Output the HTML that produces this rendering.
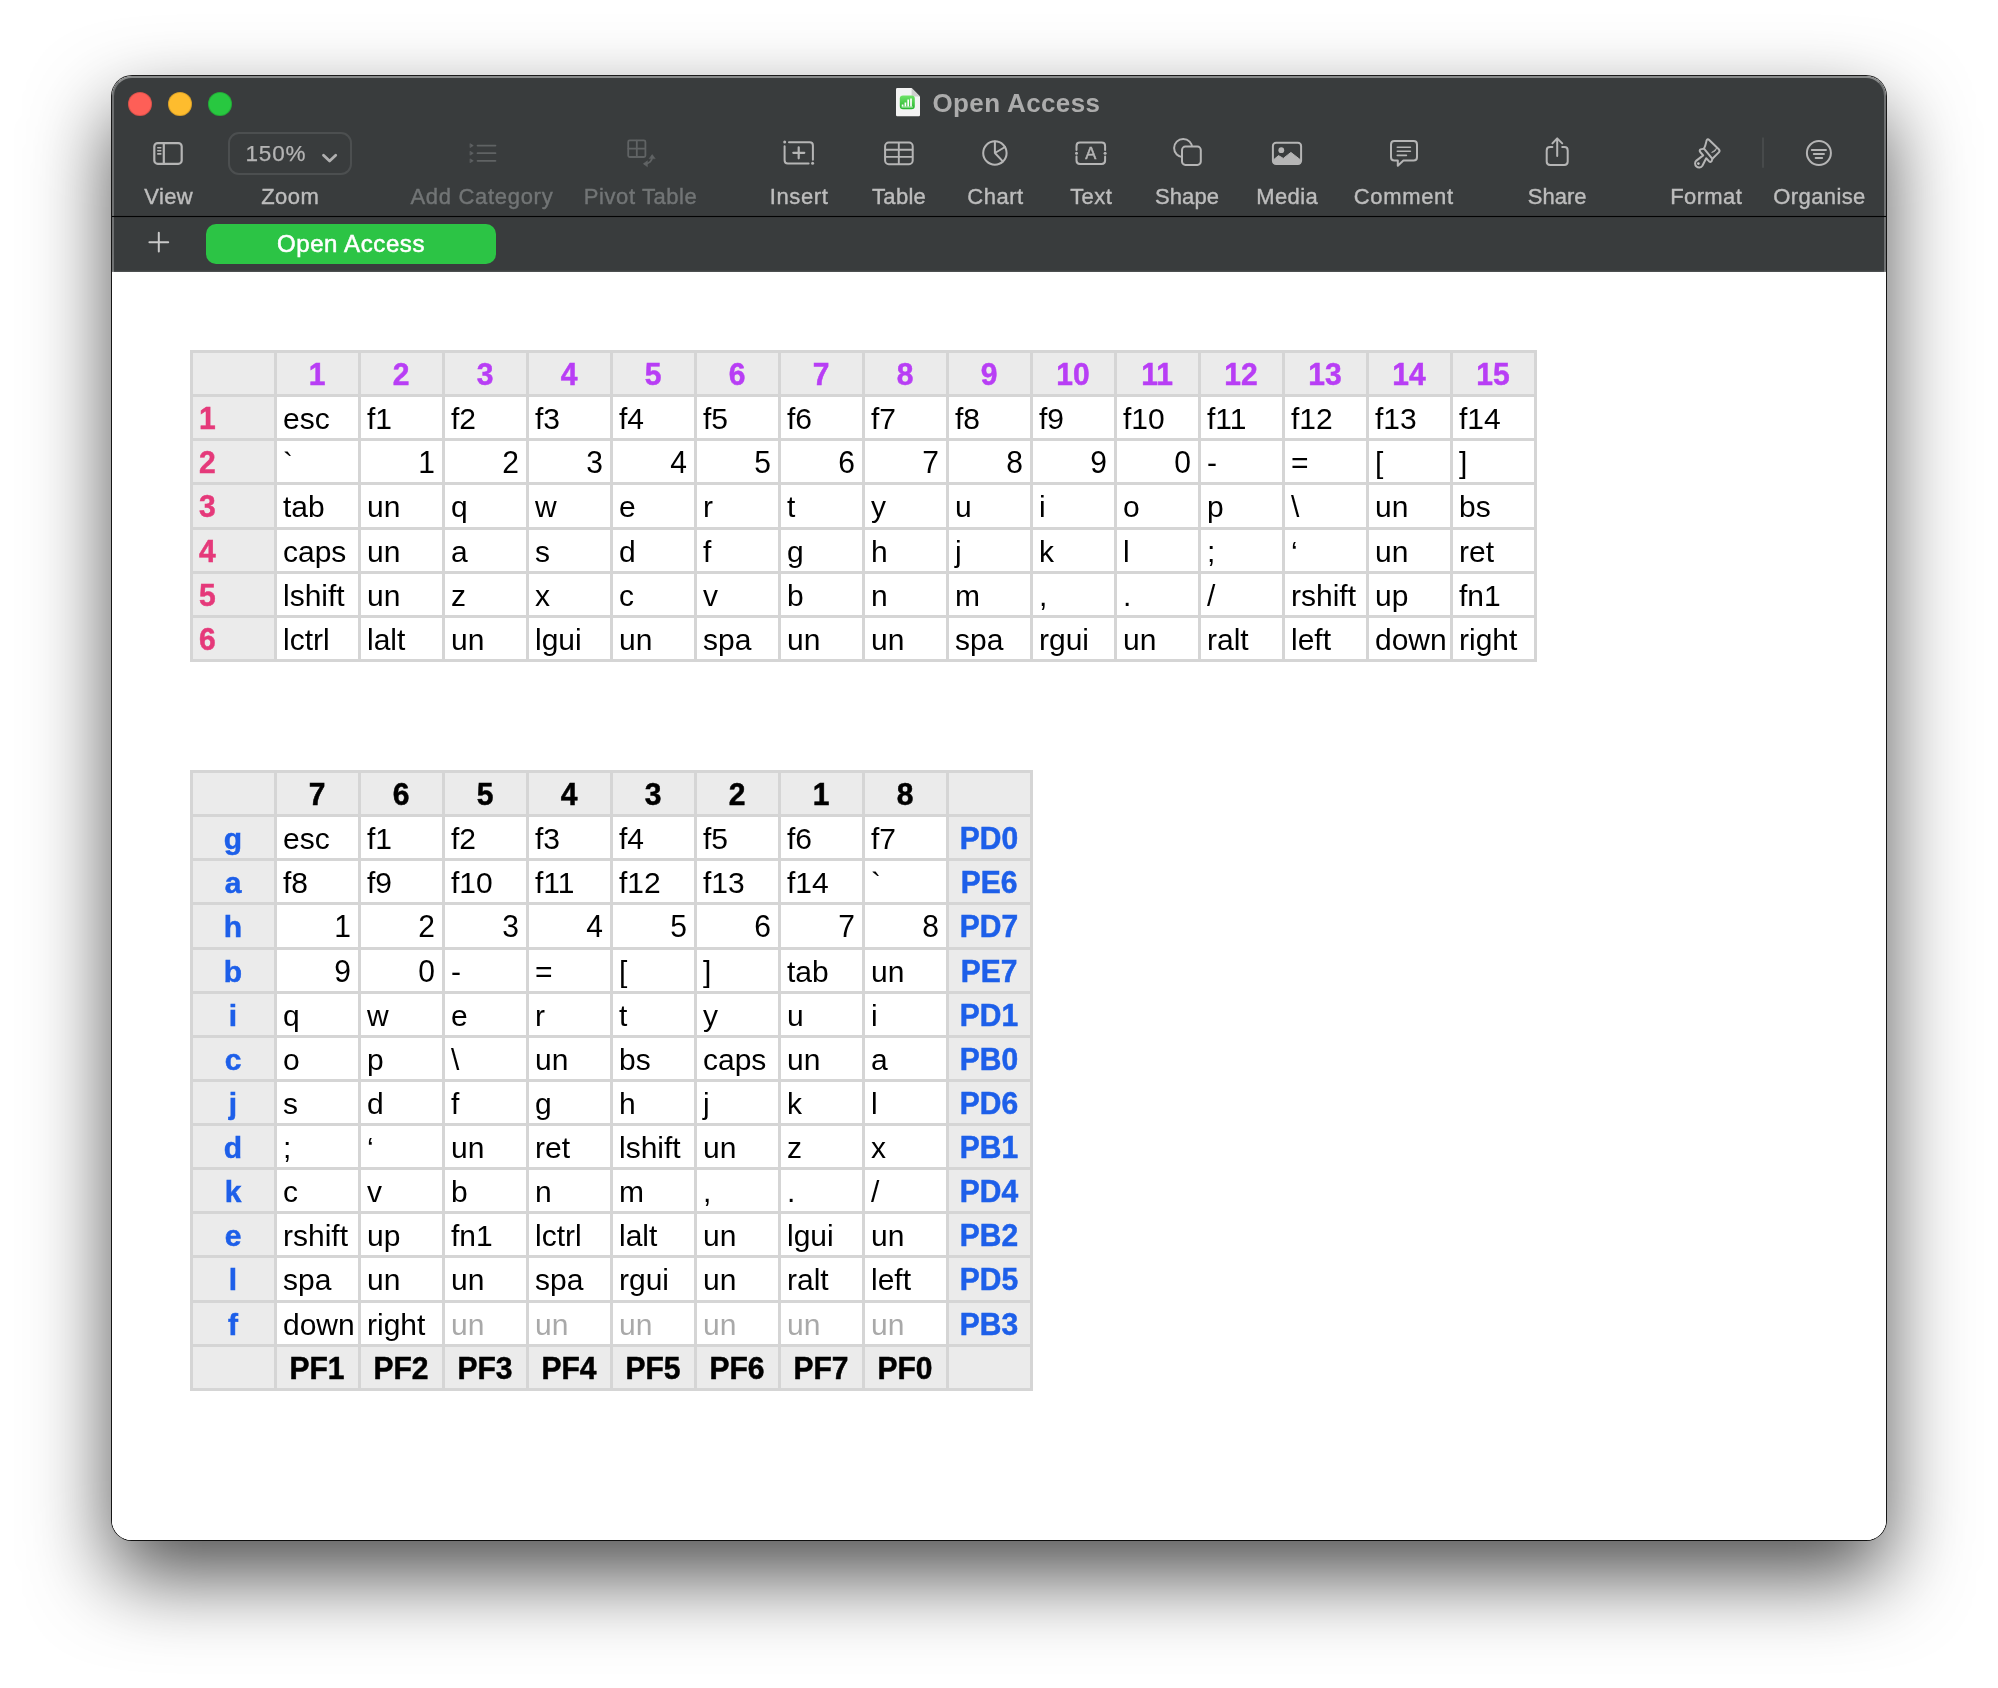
<!DOCTYPE html>
<html lang="en">
<head>
<meta charset="utf-8">
<title>Open Access</title>
<style>
html,body{margin:0;padding:0;}
body{width:1998px;height:1688px;background:#fff;overflow:hidden;position:relative;
 font-family:"Liberation Sans",sans-serif;}
#shadow{position:absolute;left:112px;top:76px;width:1774px;height:1464px;border-radius:20px;
 box-shadow:0 0 0 1px rgba(0,0,0,.88), 0 36px 82px 0 rgba(0,0,0,.69);}
#win{position:absolute;left:112px;top:76px;width:1774px;height:1464px;border-radius:20px;overflow:hidden;background:#fff;}
#inner{will-change:transform;position:absolute;left:-112px;top:-76px;width:1998px;height:1688px;}
#chrome{position:absolute;left:112px;top:76px;width:1774px;height:196px;background:#393c3d;box-shadow:inset 0 -1px 0 #4c4f50, inset 0 -2px 0 #3e4142;}
#chrome .hl{position:absolute;left:0;top:0;width:100%;height:100%;border-radius:20px 20px 0 0;box-sizing:border-box;border-top:2px solid rgba(255,255,255,.4);border-left:2px solid rgba(255,255,255,.27);border-right:2px solid rgba(255,255,255,.27);pointer-events:none;}
#sep{position:absolute;left:112px;top:216px;width:1774px;height:1px;background:#020303;box-shadow:0 0 1px rgba(0,0,0,.5);}
.tl{position:absolute;top:92px;width:24px;height:24px;border-radius:50%;box-shadow:inset 0 0 0 1px rgba(0,0,0,.14);}
#title{position:absolute;left:932.5px;top:86px;height:34px;line-height:34px;font-size:26px;font-weight:bold;color:#acacac;white-space:nowrap;letter-spacing:.37px;}
.lab{position:absolute;top:183px;-webkit-text-stroke:0.4px currentColor;height:28px;line-height:28px;font-size:22px;color:#bdbdbd;white-space:nowrap;transform:translateX(-50%);text-align:center;}
.lab.dis{color:#727576;}
#zoombox{position:absolute;left:228px;top:132px;width:124px;height:43px;border:2px solid #4c4f50;border-radius:11px;box-sizing:border-box;}
#zoomtxt{position:absolute;left:245.5px;top:139px;height:30px;line-height:30px;font-size:22.5px;color:#b4b4b4;letter-spacing:.85px;-webkit-text-stroke:0.25px currentColor;}
#tab{position:absolute;left:206px;top:224px;width:290px;height:40px;border-radius:10px;background:#2cc445;color:#fff;font-size:24px;line-height:40px;text-align:center;letter-spacing:.62px;-webkit-text-stroke:0.55px #fff;}
#canvas{position:absolute;left:112px;top:272px;width:1774px;height:1268px;background:#fff;}
.tbl{position:absolute;display:grid;background:#d5d5d5;padding:3px;gap:3px;grid-auto-rows:41.13px;font-size:30px;line-height:41px;color:#000;}
.tbl>div{background:#fff;padding:1px 0 0 6px;box-sizing:border-box;white-space:nowrap;overflow:hidden;}
.tbl>div.h{background:#ebebeb;font-weight:bold;-webkit-text-stroke:0.5px currentColor;}
.tbl>div.c{text-align:center;padding-left:0;padding-right:1px;}
.tbl>div.r{text-align:right;padding-right:7px;}
.tbl>div.g{color:#a9a9a9;}
.pu{color:#b83ef5;}
.pk{color:#e5397a;}
.bl{color:#1d5fe9;}
.bk{color:#000;}
#t1{left:190px;top:350px;grid-template-columns:repeat(16,81px);}
#t2{left:190px;top:770px;grid-template-columns:repeat(10,81px);}
#txtA{position:absolute;left:1080.8px;top:143.4px;width:20px;height:20px;line-height:20px;text-align:center;font-size:16.5px;color:#b5b5b5;-webkit-text-stroke:0.5px #b5b5b5;}
.tall{display:inline-block;transform:translateY(-0.4px) scaleY(1.055);transform-origin:50% 75.5%;}

</style>
</head>
<body>
<div id="shadow"></div>
<div id="win"><div id="inner">
<div id="chrome"><div class="hl"></div></div>
<div id="sep"></div>
<div class="tl" style="left:128px;background:#fe5f57"></div>
<div class="tl" style="left:168px;background:#febc2e"></div>
<div class="tl" style="left:208px;background:#28c840"></div>
<div id="title">Open Access</div>
<div id="zoombox"></div>
<div id="zoomtxt">150%</div>
<div class="lab" style="left:168.7px;letter-spacing:0.43px">View</div>
<div class="lab" style="left:290.2px;letter-spacing:0.43px">Zoom</div>
<div class="lab dis" style="left:481.9px;letter-spacing:0.70px">Add Category</div>
<div class="lab dis" style="left:640.6px;letter-spacing:0.57px">Pivot Table</div>
<div class="lab" style="left:799.1px;letter-spacing:0.58px">Insert</div>
<div class="lab" style="left:899.1px;letter-spacing:0.28px">Table</div>
<div class="lab" style="left:995.5px;letter-spacing:0.54px">Chart</div>
<div class="lab" style="left:1091.2px;letter-spacing:0.40px">Text</div>
<div class="lab" style="left:1187.0px;letter-spacing:0.08px">Shape</div>
<div class="lab" style="left:1287.2px;letter-spacing:0.42px">Media</div>
<div class="lab" style="left:1403.8px;letter-spacing:0.66px">Comment</div>
<div class="lab" style="left:1557.2px;letter-spacing:0.00px">Share</div>
<div class="lab" style="left:1706.2px;letter-spacing:0.38px">Format</div>
<div class="lab" style="left:1819.5px;letter-spacing:0.40px">Organise</div>
<div id="tab">Open Access</div>
<svg id="icons" width="1998" height="1688" viewBox="0 0 1998 1688" style="position:absolute;left:0;top:0;pointer-events:none" fill="none" stroke="#b5b5b5" stroke-width="2" stroke-linecap="round" stroke-linejoin="round">
<!-- view -->
<g>
<rect x="154.3" y="143.1" width="27.4" height="20.7" rx="3.4" stroke-width="2.2"/>
<path d="M163.8 143.5V163.5" stroke-width="2.2"/>
<path d="M157.8 147.7H160.8M157.8 150.8H160.8M157.8 153.9H160.8" stroke-width="1.6"/>
</g>
<!-- zoom chevron -->
<path d="M323.5 155.2L329.6 161L335.7 155.2" stroke-width="2.8" stroke="#b0b0b0"/>
<!-- add category (disabled) -->
<g stroke="#606364" stroke-width="1.7">
<path d="M477.5 145.6H495.5M477.5 153.2H495.5M477.5 160.8H495.5"/>
<path d="M470.3 143.8L473.3 145.6L470.3 147.4ZM470.3 151.4L473.3 153.2L470.3 155ZM470.3 159L473.3 160.8L470.3 162.6Z" fill="#606364" stroke-width="0.6"/>
</g>
<!-- pivot table (disabled) -->
<g stroke="#606364" stroke-width="1.8">
<rect x="628.2" y="140.4" width="17.2" height="16.6" rx="1.5"/>
<path d="M636.8 140.6V157M628.4 148.7H645.2"/>
<path d="M652.2 156.3C652.2 161.2 649 163.8 644.6 163.8" />
<path d="M649.4 158.4L652.2 154.6L655 158.4ZM647.2 161L643.4 163.8L647.2 166.6Z" fill="#606364" stroke-width="0.6"/>
</g>
<!-- insert -->
<g>
<path d="M789 142.2H809.7Q812.9 142.2 812.9 145.4V159.8M808.6 163.4H787.8Q784.6 163.4 784.6 160.2V146.2"/>
<circle cx="784.7" cy="142.1" r="1.5" fill="#b5b5b5" stroke="none"/>
<circle cx="812.6" cy="163.3" r="1.5" fill="#b5b5b5" stroke="none"/>
<path d="M793.3 152.8H804.3M798.7 147.3V158.3" stroke-width="2.2"/>
</g>
<!-- table -->
<g>
<rect x="885.1" y="142.6" width="27.6" height="21.6" rx="3.6"/>
<path d="M885.5 149.7H912.3M885.5 156.9H912.3M898.8 143V164" stroke-width="1.9"/>
</g>
<!-- chart -->
<g>
<circle cx="994.9" cy="153" r="11.7"/>
<path d="M994.9 141.4V153L1005 147M994.9 153L1002.8 161.4"/>
</g>
<!-- text -->
<g>
<path d="M1076.5 150V146Q1076.5 142.6 1079.9 142.6H1101.7Q1105.1 142.6 1105.1 146V150M1076.5 156.4V160.6Q1076.5 164 1079.9 164H1101.7Q1105.1 164 1105.1 160.6V156.4"/>
<circle cx="1076.5" cy="153.2" r="1.5" fill="#b5b5b5" stroke="none"/>
<circle cx="1105.1" cy="153.2" r="1.5" fill="#b5b5b5" stroke="none"/>
</g>
<!-- shape -->
<g>
<circle cx="1183.2" cy="148.1" r="9.1"/>
<rect x="1182" y="146.6" width="18.8" height="18.3" rx="3.4" fill="#393c3d"/>
</g>
<!-- media -->
<g>
<rect x="1272.9" y="142.8" width="28.2" height="21.2" rx="3.2"/>
<circle cx="1281.3" cy="150.2" r="2.9" fill="#b5b5b5" stroke="none"/>
<path d="M1273.6 159.8L1278.5 155.6L1283.3 158.4L1290.9 152.4L1300.4 159.8V163.2H1273.6Z" fill="#b5b5b5" stroke-width="1"/>
</g>
<!-- comment -->
<g>
<path d="M1394.4 141.1H1413.6Q1417 141.1 1417 144.5V157.2Q1417 160.6 1413.6 160.6H1403.4L1397.8 165.8V160.6H1394.4Q1391 160.6 1391 157.2V144.5Q1391 141.1 1394.4 141.1Z"/>
<path d="M1397.3 147.2H1410.4M1397.3 151.3H1410.4M1397.3 155.4H1406.4" stroke-width="1.6"/>
</g>
<!-- share -->
<g>
<path d="M1552.4 147H1550.1Q1546.7 147 1546.7 150.4V161.6Q1546.7 165 1550.1 165H1564.3Q1567.7 165 1567.7 161.6V150.4Q1567.7 147 1564.3 147H1562.2"/>
<path d="M1557.2 156V138.8M1552.4 143.4L1557.2 138.4L1562.2 143.4"/>
</g>
<!-- format -->
<g>
<path d="M1704 148.6C1705.6 145.6 1706 143 1706.6 140.4Q1707.6 138.4 1709.2 140L1718.8 149.2Q1720.4 150.8 1718.8 152.4L1712.4 158.8"/>
<path d="M1704 148.6L1712.4 158.8L1711.6 161.2Q1710.6 162.6 1709.2 161.4L1706.2 158.2L1702.4 165.8A4 4 0 1 1 1696.4 160.6L1703.2 155.4L1700.2 152Q1699 150.4 1700.6 149.4Z"/>
<circle cx="1698.4" cy="163.6" r="1.3" fill="#c8c8c8" stroke="none"/>
<path d="M1716.4 148.4C1716 150.6 1714.4 152 1711.6 152.4C1713.4 151.4 1714.8 150.2 1716.4 148.4Z" fill="#b5b5b5" stroke-width="0.8"/>
</g>
<!-- separator -->
<path d="M1763 137.5V167.8" stroke="#474a4b" stroke-width="2" stroke-linecap="butt"/>
<!-- organise -->
<g>
<circle cx="1818.9" cy="153" r="12"/>
<path d="M1811.8 150H1826M1813.8 154H1824M1815.6 158H1822.2" stroke-width="1.9"/>
</g>
<!-- plus -->
<path d="M149.4 242.2H168.2M158.8 232.8V251.6" stroke="#c9c9c9" stroke-width="2"/>
</svg>
<div id="txtA">A</div>
<svg width="30" height="34" viewBox="893 85 30 34" style="position:absolute;left:893px;top:85px">
<defs><linearGradient id="gg" x1="0" y1="0" x2="0" y2="1"><stop offset="0" stop-color="#6fe368"/><stop offset="1" stop-color="#27b52f"/></linearGradient></defs>
<path d="M897.2 88H911.6L920 96.4V115Q920 116.2 918.8 116.2H897.2Q896 116.2 896 115V89.2Q896 88 897.2 88Z" fill="#f3f3f3"/>
<path d="M911.6 88L920 96.4H913Q911.6 96.4 911.6 95Z" fill="#cfcfcf"/>
<rect x="899.8" y="95.4" width="15" height="13.8" rx="3.2" fill="url(#gg)"/>
<path d="M902.6 106.4V104.6M905.4 106.4V102.4M908.2 106.4V99.6M911 106.4V98.4" stroke="#fff" stroke-width="1.7" stroke-linecap="butt" fill="none"/>
<path d="M901.6 107H912.8" stroke="#e9ffe9" stroke-width="0.8" fill="none"/>
</svg>

<div id="canvas"></div>
<div class="tbl" id="t1">
<div class="h"></div>
<div class="h c pu"><span class="tall">1</span></div>
<div class="h c pu"><span class="tall">2</span></div>
<div class="h c pu"><span class="tall">3</span></div>
<div class="h c pu"><span class="tall">4</span></div>
<div class="h c pu"><span class="tall">5</span></div>
<div class="h c pu"><span class="tall">6</span></div>
<div class="h c pu"><span class="tall">7</span></div>
<div class="h c pu"><span class="tall">8</span></div>
<div class="h c pu"><span class="tall">9</span></div>
<div class="h c pu"><span class="tall">10</span></div>
<div class="h c pu"><span class="tall">11</span></div>
<div class="h c pu"><span class="tall">12</span></div>
<div class="h c pu"><span class="tall">13</span></div>
<div class="h c pu"><span class="tall">14</span></div>
<div class="h c pu"><span class="tall">15</span></div>
<div class="h pk"><span class="tall">1</span></div>
<div>esc</div>
<div>f1</div>
<div>f2</div>
<div>f3</div>
<div>f4</div>
<div>f5</div>
<div>f6</div>
<div>f7</div>
<div>f8</div>
<div>f9</div>
<div>f10</div>
<div>f11</div>
<div>f12</div>
<div>f13</div>
<div>f14</div>
<div class="h pk"><span class="tall">2</span></div>
<div>`</div>
<div class="r"><span class="tall">1</span></div>
<div class="r"><span class="tall">2</span></div>
<div class="r"><span class="tall">3</span></div>
<div class="r"><span class="tall">4</span></div>
<div class="r"><span class="tall">5</span></div>
<div class="r"><span class="tall">6</span></div>
<div class="r"><span class="tall">7</span></div>
<div class="r"><span class="tall">8</span></div>
<div class="r"><span class="tall">9</span></div>
<div class="r"><span class="tall">0</span></div>
<div>-</div>
<div>=</div>
<div>[</div>
<div>]</div>
<div class="h pk"><span class="tall">3</span></div>
<div>tab</div>
<div>un</div>
<div>q</div>
<div>w</div>
<div>e</div>
<div>r</div>
<div>t</div>
<div>y</div>
<div>u</div>
<div>i</div>
<div>o</div>
<div>p</div>
<div>\</div>
<div>un</div>
<div>bs</div>
<div class="h pk"><span class="tall">4</span></div>
<div>caps</div>
<div>un</div>
<div>a</div>
<div>s</div>
<div>d</div>
<div>f</div>
<div>g</div>
<div>h</div>
<div>j</div>
<div>k</div>
<div>l</div>
<div>;</div>
<div>‘</div>
<div>un</div>
<div>ret</div>
<div class="h pk"><span class="tall">5</span></div>
<div>lshift</div>
<div>un</div>
<div>z</div>
<div>x</div>
<div>c</div>
<div>v</div>
<div>b</div>
<div>n</div>
<div>m</div>
<div>,</div>
<div>.</div>
<div>/</div>
<div>rshift</div>
<div>up</div>
<div>fn1</div>
<div class="h pk"><span class="tall">6</span></div>
<div>lctrl</div>
<div>lalt</div>
<div>un</div>
<div>lgui</div>
<div>un</div>
<div>spa</div>
<div>un</div>
<div>un</div>
<div>spa</div>
<div>rgui</div>
<div>un</div>
<div>ralt</div>
<div>left</div>
<div>down</div>
<div>right</div>
</div>
<div class="tbl" id="t2">
<div class="h"></div>
<div class="h c bk"><span class="tall">7</span></div>
<div class="h c bk"><span class="tall">6</span></div>
<div class="h c bk"><span class="tall">5</span></div>
<div class="h c bk"><span class="tall">4</span></div>
<div class="h c bk"><span class="tall">3</span></div>
<div class="h c bk"><span class="tall">2</span></div>
<div class="h c bk"><span class="tall">1</span></div>
<div class="h c bk"><span class="tall">8</span></div>
<div class="h"></div>
<div class="h c bl">g</div>
<div>esc</div>
<div>f1</div>
<div>f2</div>
<div>f3</div>
<div>f4</div>
<div>f5</div>
<div>f6</div>
<div>f7</div>
<div class="h c bl"><span class="tall">PD0</span></div>
<div class="h c bl">a</div>
<div>f8</div>
<div>f9</div>
<div>f10</div>
<div>f11</div>
<div>f12</div>
<div>f13</div>
<div>f14</div>
<div>`</div>
<div class="h c bl"><span class="tall">PE6</span></div>
<div class="h c bl">h</div>
<div class="r"><span class="tall">1</span></div>
<div class="r"><span class="tall">2</span></div>
<div class="r"><span class="tall">3</span></div>
<div class="r"><span class="tall">4</span></div>
<div class="r"><span class="tall">5</span></div>
<div class="r"><span class="tall">6</span></div>
<div class="r"><span class="tall">7</span></div>
<div class="r"><span class="tall">8</span></div>
<div class="h c bl"><span class="tall">PD7</span></div>
<div class="h c bl">b</div>
<div class="r"><span class="tall">9</span></div>
<div class="r"><span class="tall">0</span></div>
<div>-</div>
<div>=</div>
<div>[</div>
<div>]</div>
<div>tab</div>
<div>un</div>
<div class="h c bl"><span class="tall">PE7</span></div>
<div class="h c bl">i</div>
<div>q</div>
<div>w</div>
<div>e</div>
<div>r</div>
<div>t</div>
<div>y</div>
<div>u</div>
<div>i</div>
<div class="h c bl"><span class="tall">PD1</span></div>
<div class="h c bl">c</div>
<div>o</div>
<div>p</div>
<div>\</div>
<div>un</div>
<div>bs</div>
<div>caps</div>
<div>un</div>
<div>a</div>
<div class="h c bl"><span class="tall">PB0</span></div>
<div class="h c bl">j</div>
<div>s</div>
<div>d</div>
<div>f</div>
<div>g</div>
<div>h</div>
<div>j</div>
<div>k</div>
<div>l</div>
<div class="h c bl"><span class="tall">PD6</span></div>
<div class="h c bl">d</div>
<div>;</div>
<div>‘</div>
<div>un</div>
<div>ret</div>
<div>lshift</div>
<div>un</div>
<div>z</div>
<div>x</div>
<div class="h c bl"><span class="tall">PB1</span></div>
<div class="h c bl">k</div>
<div>c</div>
<div>v</div>
<div>b</div>
<div>n</div>
<div>m</div>
<div>,</div>
<div>.</div>
<div>/</div>
<div class="h c bl"><span class="tall">PD4</span></div>
<div class="h c bl">e</div>
<div>rshift</div>
<div>up</div>
<div>fn1</div>
<div>lctrl</div>
<div>lalt</div>
<div>un</div>
<div>lgui</div>
<div>un</div>
<div class="h c bl"><span class="tall">PB2</span></div>
<div class="h c bl">l</div>
<div>spa</div>
<div>un</div>
<div>un</div>
<div>spa</div>
<div>rgui</div>
<div>un</div>
<div>ralt</div>
<div>left</div>
<div class="h c bl"><span class="tall">PD5</span></div>
<div class="h c bl">f</div>
<div>down</div>
<div>right</div>
<div class="g">un</div>
<div class="g">un</div>
<div class="g">un</div>
<div class="g">un</div>
<div class="g">un</div>
<div class="g">un</div>
<div class="h c bl"><span class="tall">PB3</span></div>
<div class="h"></div>
<div class="h c bk"><span class="tall">PF1</span></div>
<div class="h c bk"><span class="tall">PF2</span></div>
<div class="h c bk"><span class="tall">PF3</span></div>
<div class="h c bk"><span class="tall">PF4</span></div>
<div class="h c bk"><span class="tall">PF5</span></div>
<div class="h c bk"><span class="tall">PF6</span></div>
<div class="h c bk"><span class="tall">PF7</span></div>
<div class="h c bk"><span class="tall">PF0</span></div>
<div class="h"></div>
</div>
</div></div>
</body>
</html>
